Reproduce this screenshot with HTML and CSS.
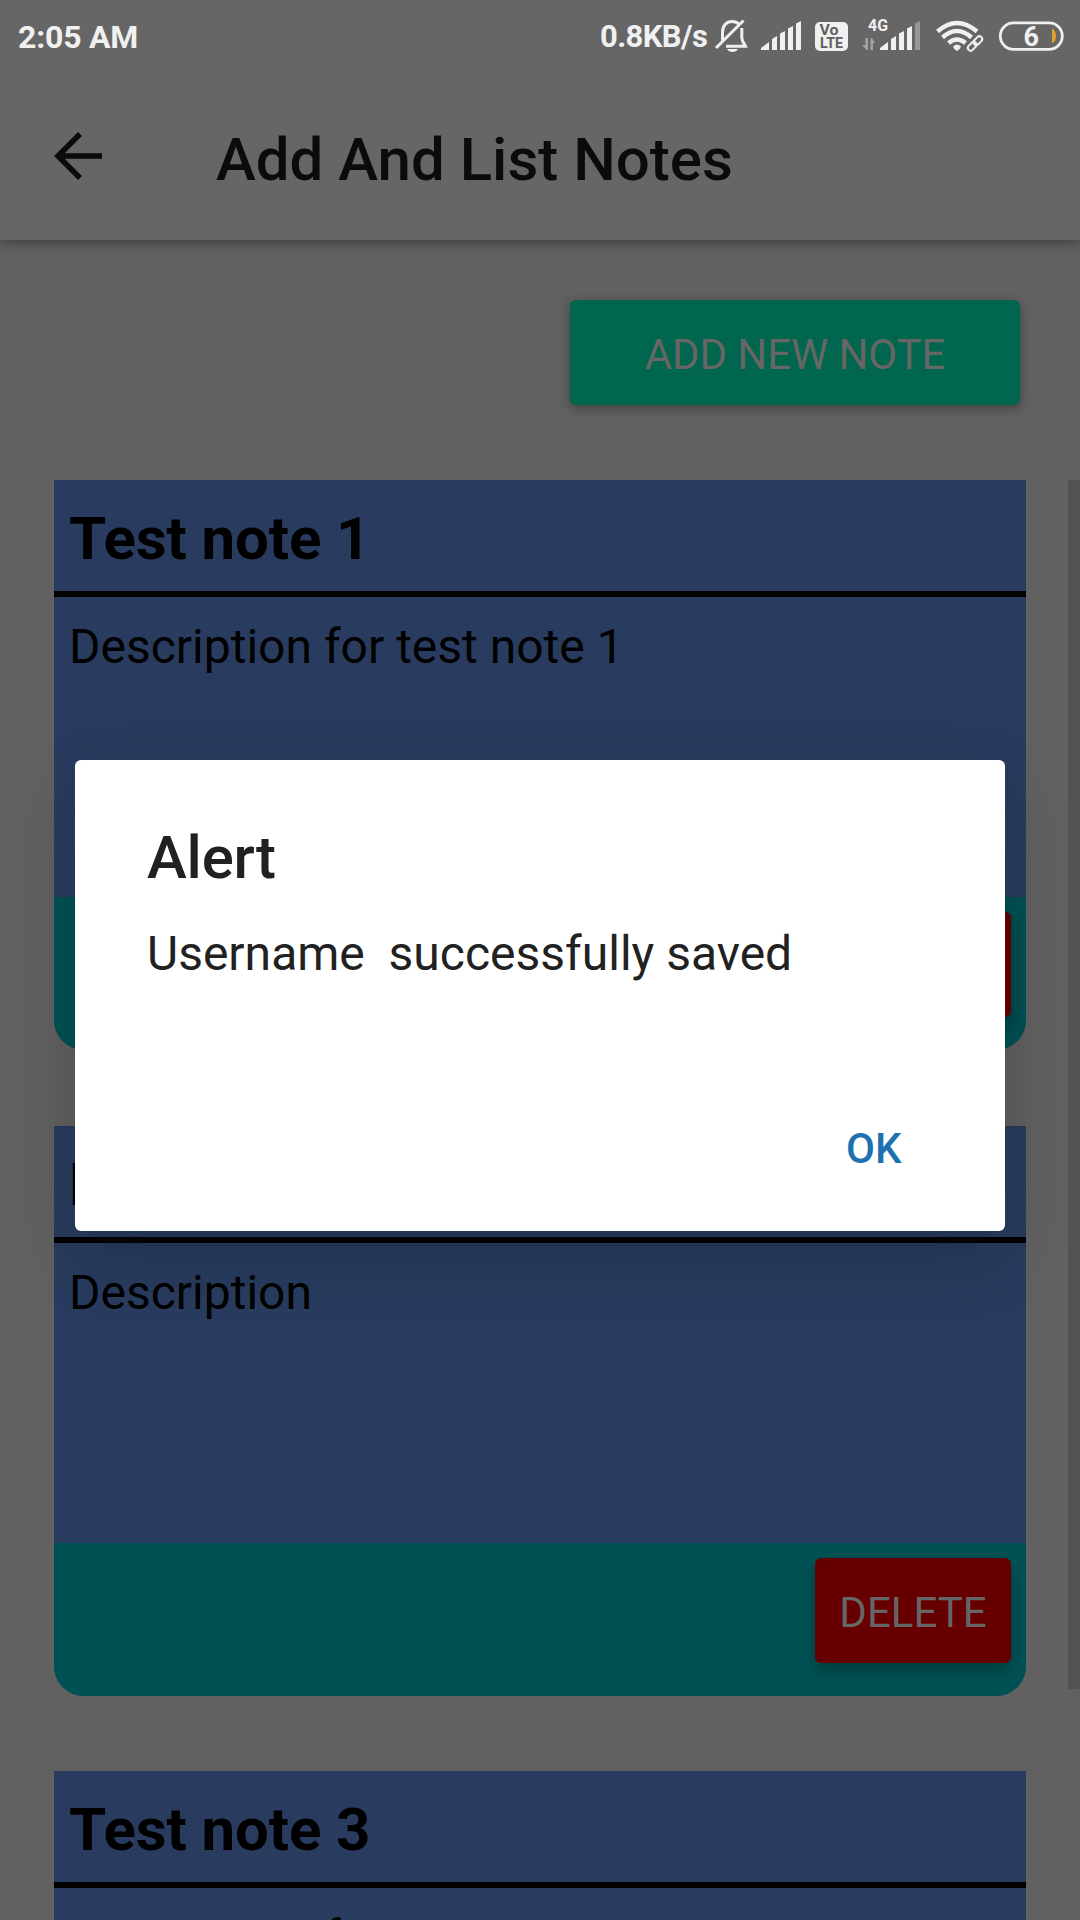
FILE: index.html
```html
<!DOCTYPE html>
<html lang="en">
<head>
<meta charset="utf-8">
<title>Add And List Notes</title>
<link rel="stylesheet" href="styles.css">
</head>
<body>
<div class="screen">
  <header class="top">
    <div class="status">
      <span class="clock">2:05 AM</span>
      <span class="speed">0.8KB/s</span>
      <svg class="bell" width="34" height="34" viewBox="714 19 34 34" fill="none" stroke="#f0f0f0" stroke-width="3">
        <path d="M722.5 41V32.500C722.5 25 727 21.500 732 21.500C735 21.500 737.5 22.500 739.500 24.500M741.8 28V37C741.8 42 744 43 745.500 46.300H726"/>
        <path d="M716 48L743.500 20.500"/>
        <path d="M727 49H738C736 53 729 53 727 49Z" fill="#f0f0f0" stroke="none"/>
      </svg>
      <svg class="signal" width="40" height="30" viewBox="761 21 40 30" fill="#f0f0f0">
        <path d="M761 50V48L769 42V50ZM772 50V39L777 36V50ZM780 50V33.500L785 31V50ZM788 50V28.500L793 26V50ZM796 50V23.500L801 21V50Z"/>
      </svg>
      <svg class="volte" width="33" height="29" viewBox="0 0 33 29">
        <rect width="33" height="29" rx="5" fill="#f0f0f0"/>
        <text x="4.500" y="12.500" textLength="19" lengthAdjust="spacingAndGlyphs">Vo</text>
        <text x="5" y="25.500" textLength="23" lengthAdjust="spacingAndGlyphs">LTE</text>
      </svg>
      <svg class="mobile" width="58" height="34" viewBox="862 18 58 34" fill="#f0f0f0">
        <text class="generation" x="868" y="31" textLength="20" lengthAdjust="spacingAndGlyphs">4G</text>
        <path d="M865.500 38H868V50H866.500L862 45H865.500ZM870.500 50V38H872L875 43H873V50Z" fill="#a2a2a2"/>
        <path d="M880 50V48L888 42V50ZM891 50V39L896 36V50ZM899 50V33.500L904 31V50ZM907 50V28.500L912 26V50Z"/>
        <path d="M915 50V23.500L920 21V50Z" fill="#989898"/>
      </svg>
      <svg class="wifi" width="49" height="33" viewBox="935 19 49 33" fill="none" stroke="#f0f0f0" stroke-width="4.400">
        <path d="M937.500 31.500Q957 14.500 977 31.500M942.500 37.500Q957 24.500 971.500 37.500M948.500 43Q957 36 965.500 43"/>
        <path d="M953 46.500Q957 42.500 961 46.500Q960.500 49 957 51Q953.500 49 953 46.500Z" fill="#f0f0f0" stroke="none"/>
        <g transform="rotate(-45 975 43.500)">
          <rect x="964" y="38.500" width="22" height="10" rx="5" fill="#666" stroke="none"/>
          <rect x="966" y="40.700" width="10" height="5.600" rx="2.800" stroke-width="2"/>
          <rect x="974" y="40.700" width="10" height="5.600" rx="2.800" stroke-width="2"/>
        </g>
      </svg>
      <svg class="battery" width="65" height="30" viewBox="999 20.500 65 30">
        <rect x="1000.300" y="22.300" width="62" height="26.500" rx="13.250" fill="none" stroke="#f0f0f0" stroke-width="2.800"/>
        <path d="M1052 28Q1056 30 1056 35.500Q1056 41 1052 43Z" fill="#e3a02f"/>
        <text class="level" x="1023.500" y="45">6</text>
      </svg>
    </div>
    <div class="toolbar">
      <svg class="back" width="48" height="48" viewBox="54 132 48 48" fill="none" stroke="#0b0b0b" stroke-width="5.600">
        <path d="M102 156H58M80 134L58 156L80 178"/>
      </svg>
      <h1>Add And List Notes</h1>
    </div>
  </header>

  <main>
    <div class="actions"><button class="button add">ADD NEW NOTE</button></div>
    <div class="list">
      <article class="note">
        <h2>Test note 1</h2>
        <p>Description for test note 1</p>
        <footer><button class="button delete">DELETE</button></footer>
      </article>
      <article class="note">
        <h2>Note 2</h2>
        <p>Description</p>
        <footer><button class="button delete">DELETE</button></footer>
      </article>
      <article class="note">
        <h2>Test note 3</h2>
        <p>Description for test note 3</p>
      </article>
    </div>
  </main>

  <div class="scrollbar"></div>
  <section class="dialog" role="alertdialog">
    <h3>Alert</h3>
    <p>Username&nbsp; successfully saved</p>
    <button class="ok">OK</button>
  </section>
</div>
</body>
</html>
```
FILE: styles.css
```css
* { box-sizing: border-box; margin: 0; padding: 0; }

body { font-family: Roboto, "Noto Sans", sans-serif; }

button { border: 0; font-family: inherit; }

svg { display: block; flex: none; overflow: visible; }

.screen {
  position: relative;
  width: 1080px;
  height: 1920px;
  overflow: hidden;
  background: #616161;
}

.top {
  height: 240px;
  background: #666;
  box-shadow: 0 3px 12px rgba(0, 0, 0, .35);
}

.status {
  display: flex;
  align-items: flex-start;
  height: 75px;
  padding-left: 18px;
  color: #f0f0f0;
  font-weight: 700;
  line-height: 38px;
  white-space: nowrap;
}

.clock { width: 582px; padding-top: 18px; font-size: 32px; letter-spacing: -.2px; }
.speed { width: 114px; padding-top: 18px; font-size: 31px; letter-spacing: -.6px; }
.bell { margin-top: 19px; }
.signal { margin: 21px 0 0 13px; }
.volte { margin: 22px 0 0 14px; }
.volte text { font-size: 14px; font-weight: 700; fill: #606060; }
.mobile { margin: 18px 0 0 14px; }
.generation { font-size: 16px; }
.wifi { margin: 19px 0 0 15px; }
.battery { margin: 20.5px 0 0 15px; }
.level { font-size: 27px; font-weight: 700; fill: #f0f0f0; }

.toolbar { display: flex; padding: 57px 0 0 54px; }

.toolbar h1 {
  margin: -7px 0 0 114px;
  color: #0b0b0b;
  font-size: 60px;
  font-weight: 500;
  line-height: 70px;
}

.actions { display: flex; justify-content: flex-end; padding: 60px 60px 75px 0; }

.button {
  height: 105px;
  padding-top: 4px;
  border-radius: 6px;
  color: #666;
  font-size: 42px;
  line-height: 101px;
  text-align: center;
}

.add {
  width: 450px;
  background: #00664d;
  letter-spacing: -.1px;
  box-shadow: 0 3px 12px rgba(0, 0, 0, .35);
}

.delete {
  width: 196px;
  background: #600;
  box-shadow: 0 8px 16px rgba(0, 0, 0, .25);
}

.list { display: flex; flex-direction: column; gap: 75.5px; padding: 0 54px; }

.note {
  display: flex;
  flex-direction: column;
  height: 570px;
  overflow: hidden;
  border-radius: 0 0 30px 30px;
  background: #293c5f;
  color: #000;
}

.note h2 {
  height: 117px;
  padding: 6px 15px 0;
  border-bottom: 6px solid #000;
  font-size: 60px;
  font-weight: 700;
  letter-spacing: -.1px;
  line-height: 105px;
}

.note p { flex: 1; padding: 22px 15px 0; font-size: 48px; line-height: 56px; }

.note footer {
  display: flex;
  justify-content: flex-end;
  height: 153px;
  padding: 15px 15px 0;
  background: #005154;
}

.scrollbar {
  position: absolute;
  top: 480px;
  right: 0;
  width: 12px;
  height: 1209px;
  background: #525252;
}

.dialog {
  position: absolute;
  top: 760px;
  left: 75px;
  display: flex;
  flex-direction: column;
  width: 930px;
  height: 471px;
  padding: 63px 72px 0;
  border-radius: 6px;
  background: #fff;
  color: #212121;
  box-shadow: 0 26px 66px rgba(0, 0, 0, .2);
}

.dialog h3 { font-size: 60px; font-weight: 500; letter-spacing: -.2px; line-height: 70px; }
.dialog p { margin-top: 33px; font-size: 48px; line-height: 56px; }

.ok {
  align-self: flex-end;
  margin: 142px 31.5px 0 0;
  background: none;
  color: #1d71b1;
  font-size: 42px;
  font-weight: 500;
  line-height: 50px;
}
```
